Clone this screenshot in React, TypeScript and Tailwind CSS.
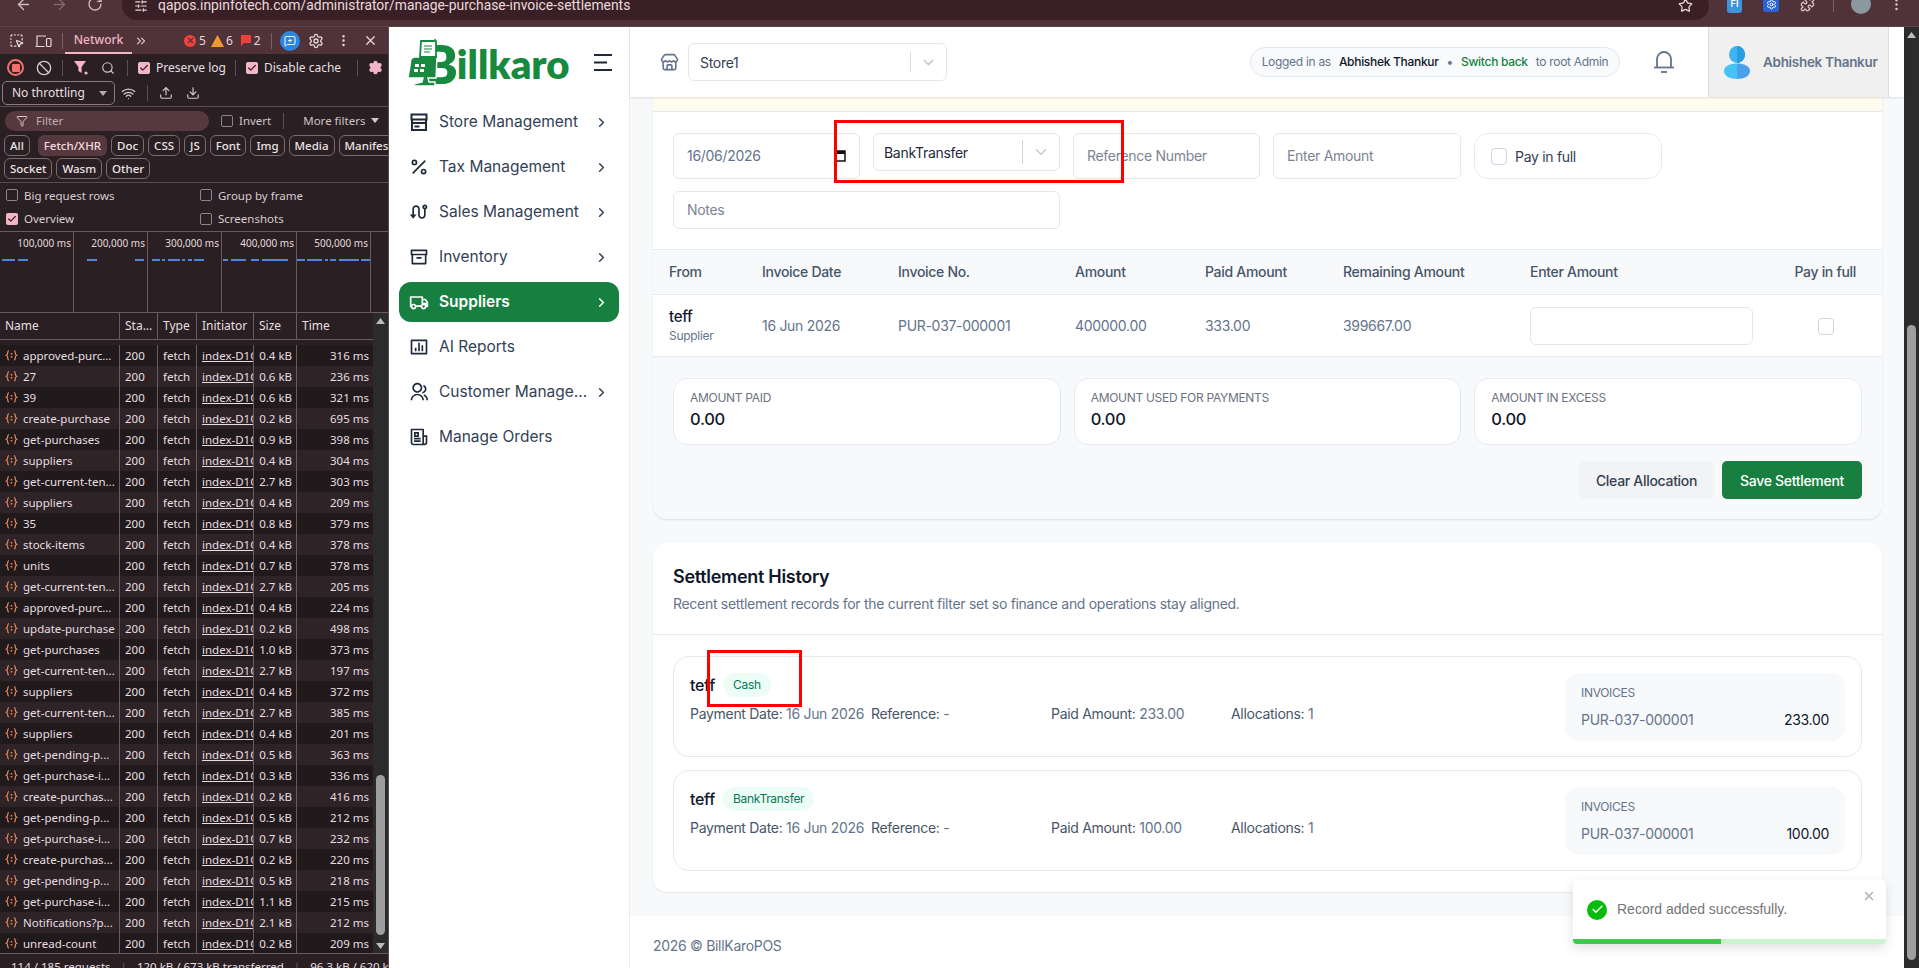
import React from "react";
import {
  ArrowLeft, ArrowRight, RotateCw, SlidersHorizontal, Star, X, MoreVertical, Settings, ChevronsRight, Ban, Search,
  Upload, Download, Wifi, ChevronRight, ChevronDown, Percent, Store, Check, Filter, SquareDashedMousePointer, MessageSquarePlus, Puzzle,
} from "lucide-react";
import { RiArchiveLine, RiBarChartBoxLine, RiNewspaperLine, RiGroupLine, RiRouteLine, RiTruckLine } from "react-icons/ri";

const ui = { fontFamily: "Inter, 'Noto Sans', sans-serif" };
const dev = { fontFamily: "'Noto Sans', 'Open Sans', sans-serif" };

const rows: [string, string, string][] = [
  ["approved-purc...", "0.4 kB", "316 ms"], ["27", "0.6 kB", "236 ms"], ["39", "0.6 kB", "321 ms"],
  ["create-purchase", "0.2 kB", "695 ms"], ["get-purchases", "0.9 kB", "398 ms"], ["suppliers", "0.4 kB", "304 ms"],
  ["get-current-ten...", "2.7 kB", "303 ms"], ["suppliers", "0.4 kB", "209 ms"], ["35", "0.8 kB", "379 ms"],
  ["stock-items", "0.4 kB", "378 ms"], ["units", "0.7 kB", "378 ms"], ["get-current-ten...", "2.7 kB", "205 ms"],
  ["approved-purc...", "0.4 kB", "224 ms"], ["update-purchase", "0.2 kB", "498 ms"], ["get-purchases", "1.0 kB", "373 ms"],
  ["get-current-ten...", "2.7 kB", "197 ms"], ["suppliers", "0.4 kB", "372 ms"], ["get-current-ten...", "2.7 kB", "385 ms"],
  ["suppliers", "0.4 kB", "201 ms"], ["get-pending-p...", "0.5 kB", "363 ms"], ["get-purchase-i...", "0.3 kB", "336 ms"],
  ["create-purchas...", "0.2 kB", "416 ms"], ["get-pending-p...", "0.5 kB", "212 ms"], ["get-purchase-i...", "0.7 kB", "232 ms"],
  ["create-purchas...", "0.2 kB", "220 ms"], ["get-pending-p...", "0.5 kB", "218 ms"], ["get-purchase-i...", "1.1 kB", "215 ms"],
  ["Notifications?p...", "2.1 kB", "212 ms"], ["unread-count", "0.2 kB", "209 ms"],
];

function DevCheck({ on, label }: { on?: boolean; label: string }) {
  return (
    <div className="flex items-center gap-[6px]">
      <span className={on ? "flex h-[12px] w-[12px] items-center justify-center rounded-[2px] bg-[#f2b6c6]" : "h-[12px] w-[12px] rounded-[2px] border border-[#8d8487]"}>
        {on && <Check size={10} strokeWidth={3} className="text-[#3a2026]" />}
      </span>
      <span>{label}</span>
    </div>
  );
}

function Braces() {
  return (
    <svg width="13" height="13" viewBox="0 0 13 13" fill="none" stroke="#e2895c" strokeWidth="1.2" className="shrink-0">
      <path d="M4 1.500C2.500 1.500 2.800 3 2.600 4.600 2.500 5.600 1.800 6 1.200 6.300 1.800 6.600 2.500 7 2.600 8 2.800 9.600 2.500 11 4 11" />
      <path d="M9 1.500c1.500 0 1.200 1.500 1.400 3.100.1 1 .8 1.400 1.400 1.700-.6.3-1.300.7-1.400 1.700C10.200 9.600 10.500 11 9 11" />
      <path d="M6.500 4v1.500M6.500 7v1.600" strokeWidth="1.6" />
    </svg>
  );
}

function Chip({ t, on }: { t: string; on?: boolean }) {
  return (
    <span className={on ? "flex h-[21px] items-center rounded-[6px] bg-[#55393f] px-[6px] text-[#f6d9e0]" : "flex h-[21px] items-center rounded-[6px] border border-[#7b6a6e] px-[5px] text-[#ece3e5]"}>{t}</span>
  );
}

function OverviewCol({ label, dashes, w }: { label: string; dashes: [number, number][]; w: string }) {
  return (
    <div className={`h-full border-r border-[#6d5a5f] ${w}`}>
      <div className="pr-[2px] pt-[4px] text-right text-[10px] leading-[14px] text-[#e5dadd]">{label}</div>
      <svg className="mt-[8px] block" width="74" height="6" viewBox="0 0 74 6">
        {dashes.map(([x, l], i) => <rect key={i} x={x} y="1" width={l} height="2" fill="#4f86d9" />)}
      </svg>
    </div>
  );
}

function DevTools() {
  return (
    <div className="flex h-full w-[389px] shrink-0 flex-col overflow-hidden border-r border-[#5d4a4f] bg-[#2a2023] text-[11.5px] tracking-normal text-[#e8dfe1]" style={dev}>
      <div className="flex h-[27px] shrink-0 items-center bg-[#4f3339] pl-[9px] text-[#e8d7db]">
        <SquareDashedMousePointer size={15} className="shrink-0" />
        <svg width="17" height="14" viewBox="0 0 17 14" fill="none" stroke="currentColor" strokeWidth="1.2" className="ml-[11px] shrink-0">
          <path d="M2 12V2h9M.5 12.500h9" /><rect x="11.500" y="4.500" width="4.500" height="8" rx="1" />
        </svg>
        <span className="ml-[10px] h-[16px] w-px shrink-0 bg-[#7a5f65]" />
        <div className="ml-[2px] flex h-full w-[67px] shrink-0 items-center justify-center border-b-[2px] border-[#f5b4c8] text-[12px] font-medium text-[#f5b4c8]">Network</div>
        <ChevronsRight size={14} className="ml-[2px] shrink-0 text-[#d8c6ca]" />
        <span className="ml-[36px] flex h-[12px] w-[12px] shrink-0 items-center justify-center rounded-full bg-[#f0443a] text-[#4f3339]"><X size={9} strokeWidth={3} /></span>
        <span className="ml-[3px] text-[12px]">5</span>
        <svg width="13" height="12" viewBox="0 0 13 12" className="ml-[5px] shrink-0"><path d="M6.500 0 13 12H0z" fill="#f09a30" /></svg>
        <span className="ml-[2px] text-[12px]">6</span>
        <svg width="12" height="11" viewBox="0 0 12 11" className="ml-[7px] shrink-0"><path d="M1 0h10v8H4L1 11z" fill="#ee3f3a" /></svg>
        <span className="ml-[2px] text-[12px]">2</span>
        <span className="ml-[10px] h-[16px] w-px shrink-0 bg-[#7a5f65]" />
        <span className="ml-[8px] flex h-[20px] w-[20px] shrink-0 items-center justify-center rounded-full bg-[#2a86e0] text-white"><MessageSquarePlus size={12} /></span>
        <Settings size={16} className="ml-[8px] shrink-0" />
        <MoreVertical size={15} className="ml-[12px] shrink-0" />
        <X size={15} className="ml-[12px] shrink-0" />
      </div>
      <div className="flex h-[27px] shrink-0 items-center pl-[7px]">
        <span className="flex h-[17px] w-[17px] items-center justify-center rounded-full border-[2px] border-[#f0706a]"><span className="h-[8px] w-[8px] rounded-[1px] bg-[#f0706a]" /></span>
        <Ban size={16} className="ml-[12px] text-[#d8c6ca]" />
        <span className="ml-[10px] h-[16px] w-px bg-[#5f4d52]" />
        <svg width="16" height="14" viewBox="0 0 16 14" className="ml-[11px]"><path d="M0 0h12L7.600 6v6L4.400 10V6z" fill="#f5b4c8" /><circle cx="12" cy="12" r="1.600" fill="#f5b4c8" /></svg>
        <Search size={14} className="ml-[11px] text-[#d8c6ca]" />
        <span className="ml-[12px] h-[16px] w-px bg-[#5f4d52]" />
        <span className="ml-[10px] text-[12px]"><DevCheck on label="Preserve log" /></span>
        <span className="ml-[9px] h-[16px] w-px bg-[#5f4d52]" />
        <span className="ml-[10px] text-[12px]"><DevCheck on label="Disable cache" /></span>
        <span className="ml-[16px] h-[16px] w-px bg-[#5f4d52]" />
        <Settings size={15} fill="#f5b4c8" className="ml-[10px] text-[#f5b4c8]" />
      </div>
      <div className="flex h-[26px] shrink-0 items-center border-b border-[#5d4a4f] pb-px pl-[2px]">
        <div className="flex h-[24px] w-[113px] items-center justify-between rounded-[5px] border border-[#8b7b7f] pl-[9px] pr-[7px] text-[12px]">
          <span>No throttling</span>
          <svg width="8" height="5" viewBox="0 0 8 5"><path d="M0 0h8L4 5z" fill="#b6a9ac" /></svg>
        </div>
        <Wifi size={15} className="ml-[6px] text-[#d8c6ca]" />
        <span className="ml-[11px] h-[16px] w-px bg-[#5f4d52]" />
        <Upload size={14} className="ml-[11px] text-[#d8c6ca]" />
        <Download size={14} className="ml-[13px] text-[#d8c6ca]" />
      </div>
      <div className="flex h-[27px] shrink-0 items-center pl-[5px]">
        <div className="flex h-[20px] w-[204px] items-center rounded-full bg-[#55393f] pl-[11px] text-[#bfaeb2]">
          <Filter size={12} className="text-[#d8c6ca]" /><span className="ml-[8px]">Filter</span>
        </div>
        <span className="ml-[12px] h-[12px] w-[12px] rounded-[2px] border border-[#8d8487]" />
        <span className="ml-[6px] text-[#cfc3c6]">Invert</span>
        <span className="ml-[12px] h-[16px] w-px bg-[#5f4d52]" />
        <span className="ml-[19px] text-[#cfc3c6]">More filters</span>
        <svg width="8" height="5" viewBox="0 0 8 5" className="ml-[6px]"><path d="M0 0h8L4 5z" fill="#d8c6ca" /></svg>
      </div>
      <div className="flex shrink-0 flex-col gap-[2px] border-b border-[#5d4a4f] pb-[3px] pl-[4px] pt-px font-medium">
        <div className="flex gap-[4px]">
          <Chip t="All" />
          <span className="h-[21px] w-px bg-[#5f4d52]" />
          <Chip t="Fetch/XHR" on /><Chip t="Doc" /><Chip t="CSS" /><Chip t="JS" /><Chip t="Font" /><Chip t="Img" /><Chip t="Media" /><Chip t="Manifest" />
        </div>
        <div className="flex gap-[4px]"><Chip t="Socket" /><Chip t="Wasm" /><Chip t="Other" /></div>
      </div>
      <div className="grid h-[49px] shrink-0 grid-cols-[194px_1fr] content-center gap-y-[6px] border-b border-[#6d5a5f] pl-[6px] text-[#d8ccd0]">
        <DevCheck label="Big request rows" /><DevCheck label="Group by frame" />
        <DevCheck on label="Overview" /><DevCheck label="Screenshots" />
      </div>
      <div className="flex h-[81px] shrink-0 border-b border-[#6d5a5f]">
        <OverviewCol w="w-[74px]" label="100,000 ms" dashes={[[2, 13], [18, 10]]} />
        <OverviewCol w="w-[74px]" label="200,000 ms" dashes={[[13, 10], [61, 9]]} />
        <OverviewCol w="w-[74px]" label="300,000 ms" dashes={[[4, 8], [14, 3], [20, 12], [34, 3], [40, 4], [46, 10]]} />
        <OverviewCol w="w-[75px]" label="400,000 ms" dashes={[[1, 5], [9, 15], [29, 8], [40, 26]]} />
        <OverviewCol w="w-[74px]" label="500,000 ms" dashes={[[-4, 12], [10, 15], [28, 3], [33, 6], [42, 20], [64, 9]]} />
        <div className="flex-1" />
      </div>
      <div className="flex min-h-0 flex-1">
        <div className="flex min-w-0 flex-1 flex-col">
          <div className="grid h-[27px] shrink-0 grid-cols-[120px_38px_39px_57px_43px_1fr] items-center border-b border-[#6d5a5f] text-[12px] text-[#e8dfe1]">
            {["Name", "Sta...", "Type", "Initiator", "Size", "Time"].map((h) => (
              <div key={h} className="flex h-full items-center border-r border-[#6d5a5f] pl-[5px] last:border-r-0">{h}</div>
            ))}
          </div>
          <div className="flex-1 pt-[5px]">
            {rows.map(([n, s, t], i) => (
              <div key={i} className={`grid h-[21px] grid-cols-[120px_38px_39px_57px_43px_1fr] items-center ${i % 2 ? "bg-[#2e2327]" : "bg-[#211a1c]"}`}>
                <div className="flex h-full items-center gap-[5px] overflow-hidden whitespace-nowrap border-r border-[#6d5a5f] pl-[5px]"><Braces />{n}</div>
                <div className="flex h-full items-center border-r border-[#6d5a5f] pl-[5px]">200</div>
                <div className="flex h-full items-center border-r border-[#6d5a5f] pl-[5px]">fetch</div>
                <div className="flex h-full items-center overflow-hidden whitespace-nowrap border-r border-[#6d5a5f] pl-[5px] underline">index-D1C</div>
                <div className="flex h-full items-center justify-end border-r border-[#6d5a5f] pr-[4px]">{s}</div>
                <div className="flex h-full items-center justify-end pr-[4px]">{t}</div>
              </div>
            ))}
          </div>
        </div>
        <div className="relative w-[15px] shrink-0 bg-[#2b2b2b]">
          <svg width="9" height="6" viewBox="0 0 9 6" className="ml-[3px] mt-[5px] block"><path d="M4.500 0 9 6H0z" fill="#bdbdbd" /></svg>
          <div className="absolute bottom-[18px] left-[3px] h-[160px] w-[9px] rounded-full bg-[#9e9e9e]" />
          <svg width="9" height="6" viewBox="0 0 9 6" className="absolute bottom-[4px] left-[3px]"><path d="M0 0h9L4.500 6z" fill="#bdbdbd" /></svg>
        </div>
      </div>
      <div className="flex h-[15px] shrink-0 items-start gap-[10px] overflow-hidden whitespace-nowrap border-t border-[#6d5a5f] pl-[11px] pt-[5px] leading-[16px]">
        <span>114 / 185 requests</span><span className="text-[#6d5a5f]">|</span><span>120 kB / 673 kB transferred</span><span className="text-[#6d5a5f]">|</span><span>96.3 kB / 620 kB r</span>
      </div>
    </div>
  );
}

function ChromeBar() {
  return (
    <div className="flex h-[27px] shrink-0 items-start overflow-hidden border-b border-[#5d434a] bg-[#4f3339] tracking-normal">
      <div className="-mt-[9px] flex h-[26px] w-[122px] shrink-0 items-center pl-[15px] text-[#cdb9bd]">
        <ArrowLeft size={17} /><ArrowRight size={17} className="ml-[19px] opacity-40" /><RotateCw size={16} className="ml-[19px]" />
      </div>
      <div className="-mt-[9px] flex h-[29px] w-[1587px] shrink-0 items-center rounded-full bg-[#3a2026] pl-[9px] pr-[16px] text-[#e8dadd]">
        <SlidersHorizontal size={14} className="ml-[3px]" />
        <span className="ml-[10px] flex-1 text-[13.9px]" style={{ fontFamily: "Roboto, sans-serif" }}>qapos.inpinfotech.com/administrator/manage-purchase-invoice-settlements</span>
        <Star size={15} />
      </div>
      <div className="-mt-[9px] flex h-[26px] flex-1 items-center text-[#d8c6ca]">
        <span className="ml-[18px] flex h-[18px] w-[15px] items-center justify-center rounded-[3px] bg-[#3f93dc] text-[9px] font-semibold text-white">FI</span>
        <span className="ml-[21px] flex h-[16px] w-[16px] items-center justify-center rounded-[3px] bg-[#2a63d8] text-white"><Settings size={11} /></span>
        <Puzzle size={15} className="ml-[21px]" />
        <span className="ml-[18px] h-[16px] w-px bg-[#7a5f65]" />
        <span className="ml-[17px] h-[20px] w-[20px] rounded-full bg-[#8b98a0]" />
        <MoreVertical size={15} className="ml-[18px]" />
      </div>
    </div>
  );
}

function Logo() {
  return (
    <div className="relative flex h-[50px] w-[160px] items-end tracking-normal text-[#178a40]">
      <span className="pl-[16px] text-[52px] font-extrabold leading-[46px]" style={{ fontFamily: "Lato, sans-serif" }}>B</span>
      <span className="-ml-[1px] text-[40px] font-extrabold leading-[46px]" style={{ fontFamily: "Lato, sans-serif" }}>illkaro</span>
      <svg width="38" height="50" viewBox="0 0 38 50" className="absolute left-0 top-0">
        <path d="M7 20h23l-1 21H21l1 4h6v4H7v-2l8-2 1-4H1l3-19z" fill="#178a40" stroke="#fff" strokeWidth="1.400" />
        <path d="M14 4h13l1-1 1 1v16H13z" fill="#fff" stroke="#178a40" strokeWidth="1.800" />
        <path d="M17 9h8M17 12h8M17 15h6" stroke="#178a40" strokeWidth="1.200" />
        <rect x="8" y="27" width="4" height="3" fill="#fff" /><rect x="14" y="27" width="4" height="3" fill="#fff" />
        <rect x="7" y="32" width="4" height="3" fill="#fff" /><rect x="13" y="32" width="4" height="3" fill="#fff" />
      </svg>
    </div>
  );
}

function StoreMgmtIcon() {
  return (
    <svg width="20" height="20" viewBox="0 0 20 20" fill="none" stroke="currentColor" strokeWidth="2">
      <rect x="2.500" y="2.500" width="15" height="5" /><path d="M3 7.500V18h14V7.500" /><path d="M2 11h16" /><path d="M5.500 14.500h5" />
    </svg>
  );
}

const nav: { label: string; icon: React.ReactNode; chevron?: boolean; active?: boolean }[] = [
  { label: "Store Management", icon: <StoreMgmtIcon />, chevron: true },
  { label: "Tax Management", icon: <Percent size={20} />, chevron: true },
  { label: "Sales Management", icon: <RiRouteLine size={20} />, chevron: true },
  { label: "Inventory", icon: <RiArchiveLine size={20} />, chevron: true },
  { label: "Suppliers", icon: <RiTruckLine size={20} />, chevron: true, active: true },
  { label: "AI Reports", icon: <RiBarChartBoxLine size={20} /> },
  { label: "Customer Manage...", icon: <RiGroupLine size={20} />, chevron: true },
  { label: "Manage Orders", icon: <RiNewspaperLine size={20} /> },
];

function Sidebar() {
  return (
    <aside className="flex h-full w-[241px] shrink-0 flex-col border-r border-[#ececec] bg-white tracking-normal">
      <div className="flex h-[70px] shrink-0 items-center pl-[18px]">
        <Logo />
        <svg width="18" height="17" viewBox="0 0 18 17" stroke="#1e293b" strokeWidth="2" className="ml-[27px]"><path d="M0 1h18M0 8.500h13M0 16h18" /></svg>
      </div>
      <nav className="mt-[5px] flex flex-col gap-[5px] px-[10px]">
        {nav.map((n) => (
          <div key={n.label} className={n.active ? "flex h-[40px] items-center rounded-[12px] bg-[#178040] px-[10px] text-white" : "flex h-[40px] items-center px-[10px] text-[#334155]"}>
            <span className={n.active ? "flex w-[20px] justify-center" : "flex w-[20px] justify-center text-[#1e293b]"}>{n.icon}</span>
            <span className={n.active ? "ml-[10px] flex-1 text-[15.5px] font-semibold" : "ml-[10px] flex-1 text-[15.5px]"}>{n.label}</span>
            {n.chevron && <ChevronRight size={15} strokeWidth={2.400} />}
          </div>
        ))}
      </nav>
    </aside>
  );
}

function Header() {
  return (
    <header className="z-10 flex h-[70px] shrink-0 items-center bg-white pl-[30px] pr-[15px] shadow-[0_1px_2px_rgba(0,0,0,0.12)]">
      <Store size={19} className="text-[#64748b]" />
      <div className="ml-[9px] flex h-[38px] w-[259px] items-center rounded-[6px] border border-[#e2e8f0] pl-[11px] text-[14px] text-[#334155]">
        <span className="flex-1">Store1</span>
        <span className="h-[20px] w-px bg-[#d9dde3]" />
        <ChevronDown size={17} className="mx-[9px] text-[#c4c9d0]" />
      </div>
      <div className="ml-auto flex h-[30px] w-[370px] items-center justify-center gap-[8px] whitespace-nowrap rounded-full border border-[#e2e8f0] bg-[#f8fafc] text-[12px] text-[#64748b]">
        <span>Logged in as</span>
        <span className="font-medium text-[#0f172a]">Abhishek Thankur</span>
        <span>•</span>
        <span className="font-medium text-[#178040]">Switch back</span>
        <span>to root Admin</span>
      </div>
      <svg width="22" height="24" viewBox="0 0 22 24" fill="none" stroke="#64748b" strokeWidth="1.800" className="ml-[33px]">
        <path d="M4 17V9a7 7 0 0 1 14 0v8" /><path d="M1 17.500h20" /><path d="M8 22h6" />
      </svg>
      <div className="ml-[33px] flex h-full w-[181px] items-center border-x border-[#dddddd] bg-[#f0f0f0] pl-[15px]">
        <svg width="26" height="33" viewBox="0 0 26 33">
          <ellipse cx="13" cy="8.500" rx="8" ry="8.500" fill="#3fb4ee" /><path d="M13 0c4.500 0 8 3.800 8 8.500S17.500 17 13 17z" fill="#2a9ce0" />
          <path d="M13 17.500C6 17.500 0 20 0 25c0 5 6 8 13 8z" fill="#46c3f5" /><path d="M13 17.500c7 0 13 2.500 13 7.500 0 5-6 8-13 8z" fill="#4aa0ea" />
        </svg>
        <span className="ml-[13px] whitespace-nowrap text-[13.5px] font-semibold text-[#64748b]">Abhishek Thankur</span>
      </div>
    </header>
  );
}

const Field = ({ children, className }: { children: React.ReactNode; className: string }) => (
  <div className={`flex items-center rounded-[6px] border border-[#e5e7eb] bg-white pb-[1px] pl-[13px] text-[14px] ${className}`}>{children}</div>
);

const Box = () => <span className="h-[17px] w-[16px] rounded-[4px] border border-[#cbd5e1] bg-white" />;

const tableCols = "grid grid-cols-[93px_136px_177px_130px_138px_187px_1fr_86px] pl-[16px] pr-[26px] items-center";

function Settlement() {
  return (
    <section className="overflow-hidden rounded-b-[14px] bg-[#f8f9fb] shadow-[0_1px_2px_rgba(0,0,0,0.1)]">
      <div className="h-[15px] border-b border-[#e5e9f0] bg-[#fffcef]" />
      <div className="bg-white px-[20px] pb-[20px] pt-[21px]">
        <div className="grid grid-cols-[187px_187px_187px_188px_188px] gap-x-[13px] gap-y-[12px]">
          <Field className="h-[46px] justify-between pr-[13px] text-[#64748b]">
            <span>16/06/2026</span>
            <svg width="12" height="13" viewBox="0 0 12 13" fill="none" stroke="#111" strokeWidth="1.500"><rect x="1" y="2" width="10" height="10" /><path d="M1 3.500h10" strokeWidth="3" /></svg>
          </Field>
          <div className="flex h-[38px] items-center rounded-[6px] border border-[#e5e7eb] bg-white pl-[10px] text-[14px] text-[#1e293b]">
            <span className="flex-1">BankTransfer</span>
            <span className="h-[24px] w-px bg-[#d1d5db]" />
            <ChevronDown size={18} className="mx-[9px] text-[#c4c9d0]" />
          </div>
          <Field className="h-[46px] text-[#7b8494]">Reference Number</Field>
          <Field className="h-[46px] text-[#7b8494]">Enter Amount</Field>
          <div className="flex h-[46px] items-center gap-[8px] rounded-[14px] border border-[#e5e9f0] bg-white pl-[16px] text-[14px] text-[#334155]"><Box />Pay in full</div>
          <Field className="col-span-2 h-[38px] text-[#7b8494]">Notes</Field>
        </div>
      </div>
      <div className={`${tableCols} h-[46px] border-y border-[#e5e9f0] bg-[#f8f9fb] pb-[2px] text-[14px] font-medium text-[#475569]`}>
        <span>From</span><span>Invoice Date</span><span>Invoice No.</span><span>Amount</span><span>Paid Amount</span><span>Remaining Amount</span><span>Enter Amount</span><span className="text-right">Pay in full</span>
      </div>
      <div className={`${tableCols} h-[62px] border-b border-[#e5e9f0] bg-white text-[14px] text-[#64748b]`}>
        <div className="flex flex-col">
          <span className="text-[15px] font-medium leading-[20px] text-[#0f172a]">teff</span>
          <span className="text-[12px] leading-[18px]">Supplier</span>
        </div>
        <span>16 Jun 2026</span><span>PUR-037-000001</span><span>400000.00</span><span>333.00</span><span>399667.00</span>
        <div className="h-[38px] w-[223px] rounded-[6px] border border-[#e5e7eb] bg-white" />
        <div className="flex justify-end pr-[22px] pt-[2px]"><Box /></div>
      </div>
      <div className="px-[20px] pb-[20px] pt-[21px]">
        <div className="grid grid-cols-3 gap-x-[13px]">
          {[["AMOUNT PAID"], ["AMOUNT USED FOR PAYMENTS"], ["AMOUNT IN EXCESS"]].map(([l]) => (
            <div key={l} className="h-[67px] rounded-[14px] border border-[#e5e9f0] bg-white pl-[16px] pt-[10px]">
              <div className="text-[12px] leading-[18px] text-[#6b7280]">{l}</div>
              <div className="text-[16.5px] font-medium leading-[24px] text-[#0f172a]">0.00</div>
            </div>
          ))}
        </div>
        <div className="mt-[16px] flex justify-end gap-[8px]">
          <div className="flex h-[38px] w-[135px] items-center justify-center rounded-[5px] bg-[#f1f3f5] text-[14px] font-medium text-[#374151]">Clear Allocation</div>
          <div className="flex h-[38px] w-[140px] items-center justify-center rounded-[5px] bg-[#178040] text-[14px] font-medium text-white">Save Settlement</div>
        </div>
      </div>
    </section>
  );
}

function Record({ method, paid }: { method: string; paid: string }) {
  return (
    <div className="flex h-[101px] justify-between rounded-[16px] border border-[#e5e9f0] bg-white pl-[16px] pr-[16px] pt-[16px]">
      <div>
        <div className="flex h-[24px] items-center gap-[8px]">
          <span className="text-[16px] font-medium text-[#0f172a]">teff</span>
          <span className="flex h-[24px] items-center rounded-full bg-[#ecfdf5] px-[10px] text-[12px] text-[#047857]">{method}</span>
        </div>
        <div className="mt-[6px] grid grid-cols-[181px_180px_180px_120px] whitespace-nowrap text-[14px] leading-[22px] text-[#475569]">
          <span>Payment Date: <span className="text-[#64748b]">16 Jun 2026</span></span>
          <span>Reference: <span className="text-[#64748b]">-</span></span>
          <span>Paid Amount: <span className="text-[#64748b]">{paid}</span></span>
          <span>Allocations: <span className="text-[#64748b]">1</span></span>
        </div>
      </div>
      <div className="h-[68px] w-[280px] rounded-[14px] bg-[#f8f9fb] px-[16px] pt-[11px]">
        <div className="text-[12px] leading-[18px] text-[#64748b]">INVOICES</div>
        <div className="mt-[7px] flex justify-between text-[14px] leading-[22px] text-[#64748b]"><span>PUR-037-000001</span><span className="text-[#0f172a]">{paid}</span></div>
      </div>
    </div>
  );
}

function History() {
  return (
    <section className="mt-[24px] rounded-[14px] bg-white shadow-[0_1px_2px_rgba(0,0,0,0.08)]">
      <div className="h-[92px] border-b border-[#e5e9f0] pl-[20px] pt-[21px]">
        <h2 className="text-[18px] font-semibold leading-[26px] text-[#0f172a]">Settlement History</h2>
        <p className="mt-[3px] text-[14px] leading-[22px] text-[#64748b]">Recent settlement records for the current filter set so finance and operations stay aligned.</p>
      </div>
      <div className="flex flex-col gap-[13px] px-[20px] pb-[21px] pt-[21px]">
        <Record method="Cash" paid="233.00" />
        <Record method="BankTransfer" paid="100.00" />
      </div>
    </section>
  );
}

function Toast() {
  return (
    <div className="absolute left-[1573px] top-[853px] z-20 h-[64px] w-[313px] overflow-hidden rounded-[4px] bg-white tracking-normal shadow-[0_4px_12px_rgba(0,0,0,0.12)]" style={{ fontFamily: "'Liberation Sans', sans-serif" }}>
      <div className="flex h-[59px] items-center pl-[14px]">
        <span className="flex h-[20px] w-[20px] items-center justify-center rounded-full bg-[#07bc0c] text-white"><Check size={13} strokeWidth={3} /></span>
        <span className="ml-[10px] text-[14px] text-[#757575]">Record added successfully.</span>
      </div>
      <X size={14} strokeWidth={2.500} className="absolute right-[10px] top-[9px] text-[#b0b0b0]" />
      <div className="flex h-[5px]"><div className="h-full w-[148px] bg-[#40c94a]" /><div className="h-full flex-1 bg-[#cdf2d0]" /></div>
    </div>
  );
}

export default function App() {
  return (
    <div className="flex h-[968px] w-[1919px] flex-col overflow-hidden bg-white tracking-[-0.3px]" style={ui}>
      <ChromeBar />
      <div className="relative flex min-h-0 flex-1">
        <DevTools />
        <Sidebar />
        <div className="flex min-w-0 flex-1 flex-col">
          <Header />
          <main className="flex min-h-0 flex-1 flex-col overflow-hidden bg-[#f8f9fb]">
            <div className="h-[819px] shrink-0 pl-[23px] pr-[22px]">
              <Settlement />
              <History />
            </div>
            <footer className="flex flex-1 items-center bg-white pl-[23px] pt-[7px] text-[14px] text-[#64748b]">2026 © BillKaroPOS</footer>
          </main>
        </div>
        <div className="relative w-[15px] shrink-0 bg-[#2b2b2b]">
          <svg width="9" height="6" viewBox="0 0 9 6" className="ml-[3px] mt-[5px] block"><path d="M4.500 0 9 6H0z" fill="#bdbdbd" /></svg>
          <div className="absolute bottom-[8px] left-[3px] h-[635px] w-[9px] rounded-full bg-[#9e9e9e]" />
        </div>
        <Toast />
        <div className="absolute left-[834px] top-[93px] z-30 h-[63px] w-[290px] border-[3px] border-[#ff0000]" />
        <div className="absolute left-[707px] top-[623px] z-30 h-[57px] w-[95px] border-[3px] border-[#ff0000]" />
      </div>
    </div>
  );
}
